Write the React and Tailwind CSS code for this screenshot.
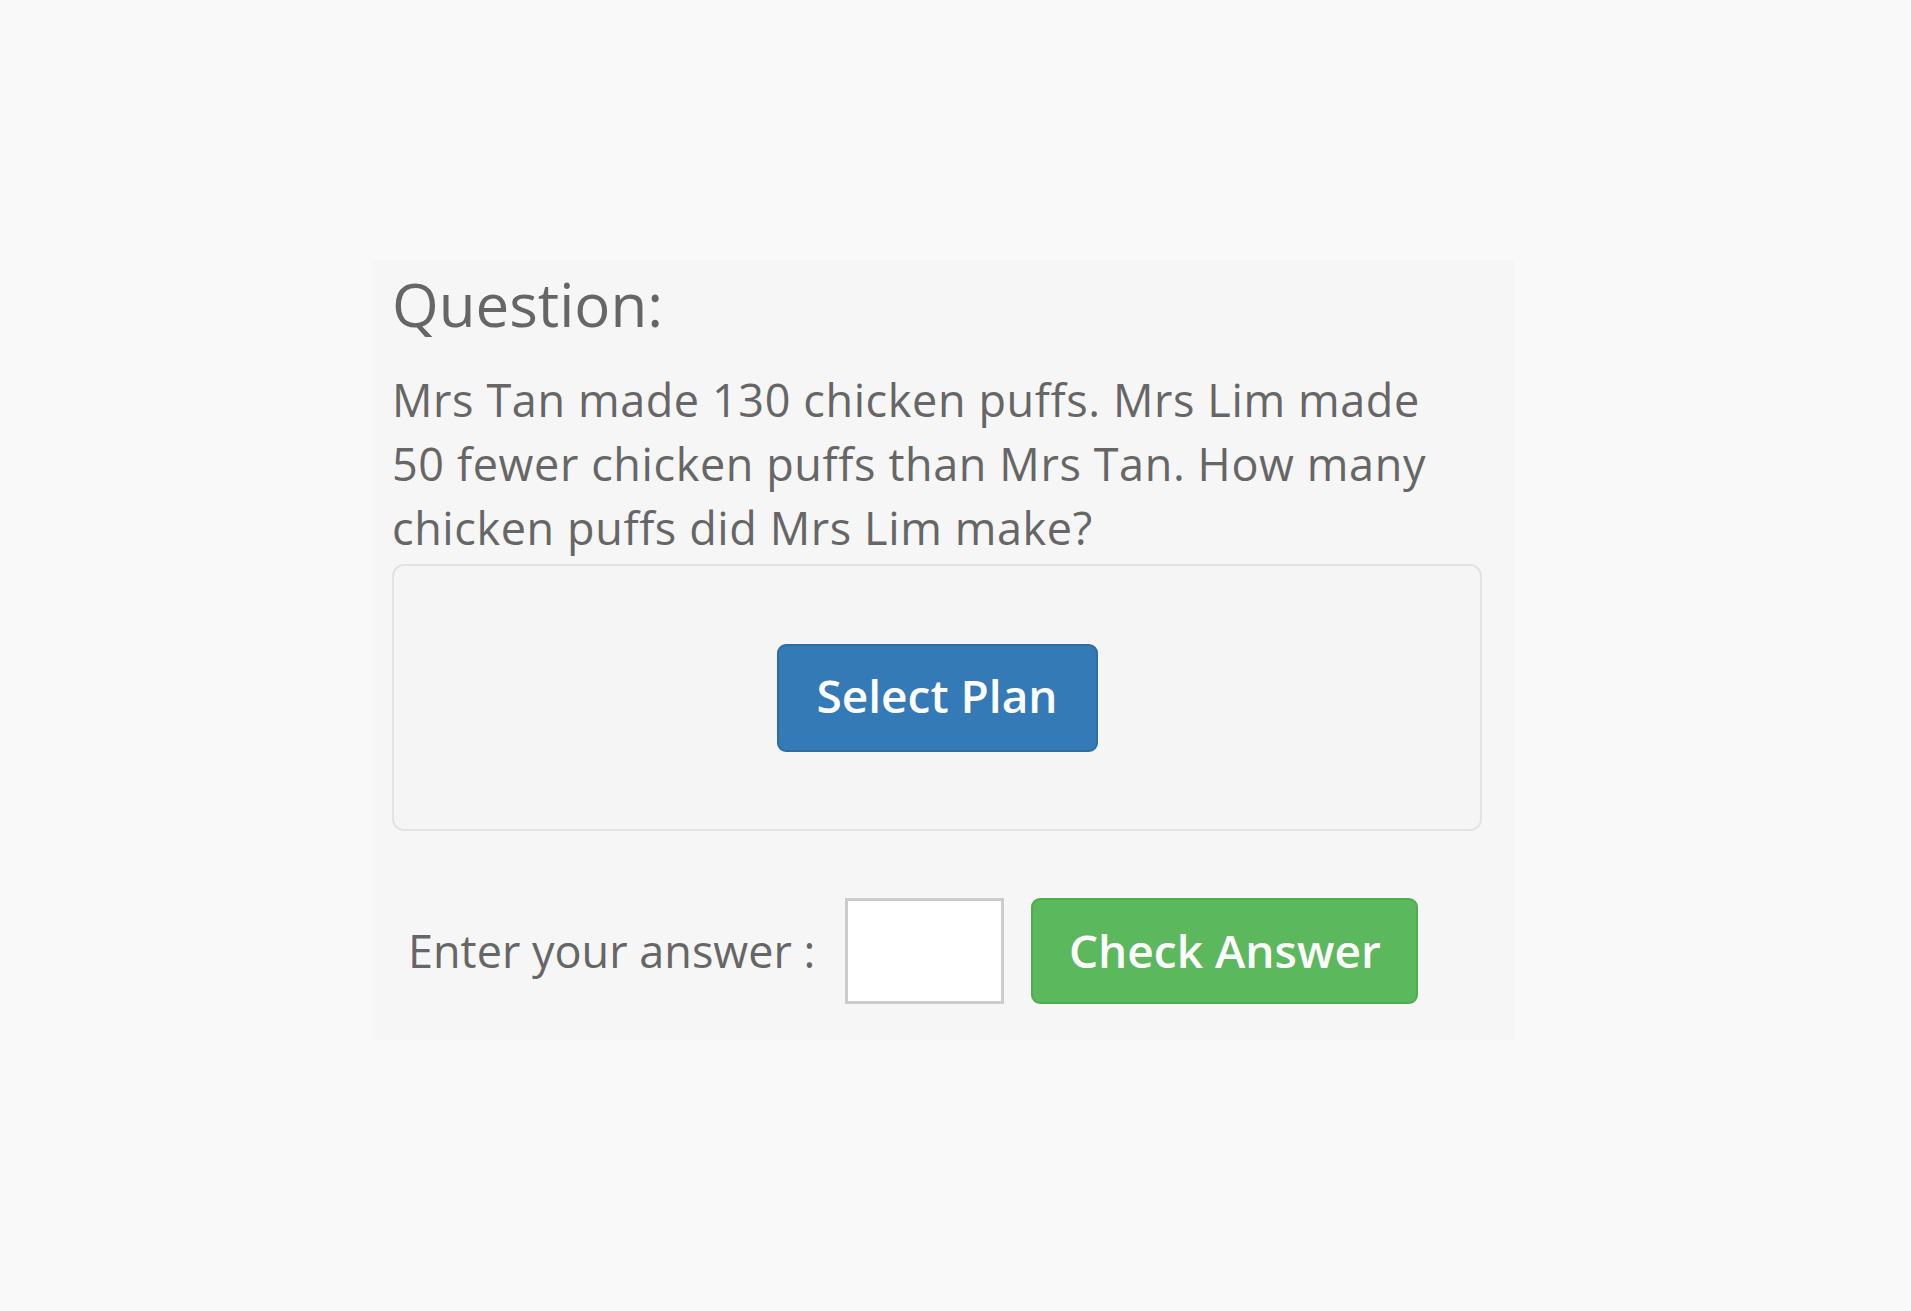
const App = () => {
  return (
    <div
      className="min-h-screen bg-[#f9f9f9] pt-[260px]"
      style={{ fontFamily: '"Open Sans", "Noto Sans", sans-serif' }}
    >
      <div className="ml-[372px] w-[1142px] h-[780px] bg-[#f6f6f6] pl-[20px] pr-[32px] pt-[11px] text-[#666666]">
        <h3 className="text-[60px] leading-[66px]">Question:</h3>
        <p className="mt-[31px] text-[45px] leading-[64px] tracking-[0.6px] w-[1050px]">
          Mrs Tan made 130 chicken puffs. Mrs Lim made 50 fewer chicken puffs than Mrs Tan. How many chicken puffs did Mrs Lim make?
        </p>

        <div className="mt-[4px] h-[267px] rounded-[12px] border-2 border-[#e3e3e3] bg-[#f5f5f5] flex items-center justify-center">
          <button className="w-[321px] h-[108px] pb-[4px] rounded-[9px] bg-[#337ab7] border-2 border-[#2e6da4] text-white text-[46px] font-semibold">
            Select Plan
          </button>
        </div>

        <div className="mt-[67px] flex items-center pl-[16px]">
          <label className="text-[45px] leading-[64px]">Enter your answer :</label>
          <input
            type="text"
            className="ml-[30px] w-[159px] h-[106px] bg-white border-[3px] border-[#cccccc] outline-none"
          />
          <button className="ml-[27px] w-[387px] h-[106px] pb-[2px] rounded-[9px] bg-[#5cb85c] border-2 border-[#4cae4c] text-white text-[46px] font-semibold">
            Check Answer
          </button>
        </div>
      </div>
    </div>
  );
};

export default App;
